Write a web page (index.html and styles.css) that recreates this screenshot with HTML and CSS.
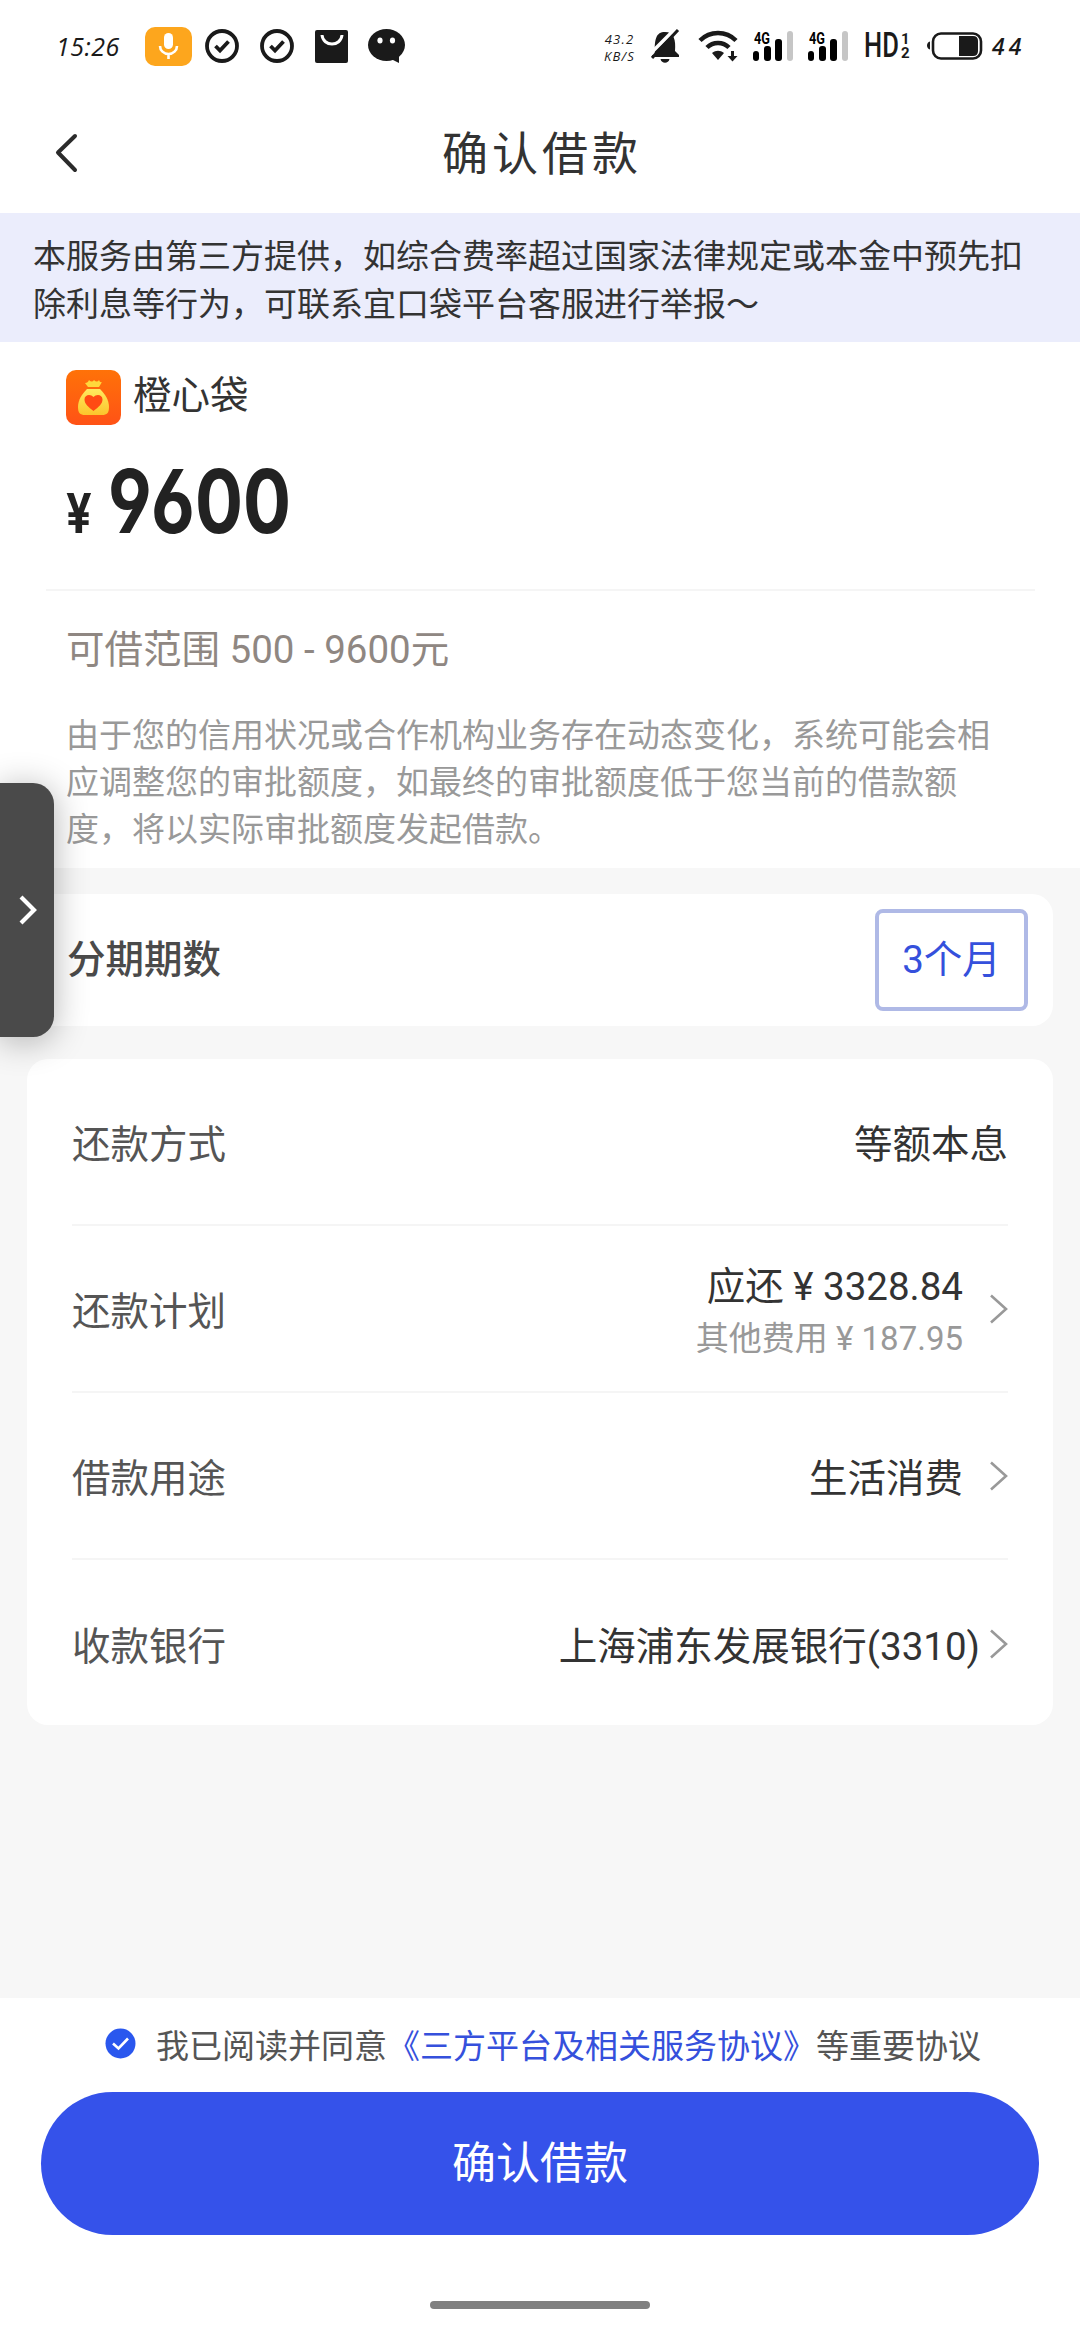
FILE: index.html
```html
<!DOCTYPE html>
<html lang="zh-CN">
  <head>
    <meta charset="UTF-8" />
    <meta name="viewport" content="width=device-width, initial-scale=1.0" />
    <title>确认借款</title>
    <link rel="stylesheet" href="styles.css" />
  </head>
  <body class="body">
    <div class="statusBar">
      <span class="time">15:26</span>
      <svg class="mic" width="47" height="39" viewBox="0 0 47 39">
        <rect width="47" height="39" rx="10" fill="#fda61d" />
        <rect x="19" y="6" width="9" height="16" rx="4.5" fill="#fff" />
        <path d="M15 19a8.500 8 0 0 0 17 0M23.500 27v5" fill="none" stroke="#fff" stroke-width="2.600" />
      </svg>
      <svg class="check" width="34" height="34" viewBox="0 0 34 34">
        <circle cx="17" cy="17" r="15" fill="none" stroke="#1a1a1a" stroke-width="3.800" />
        <path d="M10.500 17l4.500 4.500 8.500-9" fill="none" stroke="#1a1a1a" stroke-width="3.800" />
      </svg>
      <svg class="check2" width="34" height="34" viewBox="0 0 34 34">
        <circle cx="17" cy="17" r="15" fill="none" stroke="#1a1a1a" stroke-width="3.800" />
        <path d="M10.500 17l4.500 4.500 8.500-9" fill="none" stroke="#1a1a1a" stroke-width="3.800" />
      </svg>
      <svg class="bag" width="33" height="33" viewBox="0 0 33 33">
        <rect width="33" height="33" rx="2" fill="#1a1a1a" />
        <path d="M7 5c1 12 19 12 20 0" fill="none" stroke="#fff" stroke-width="3" />
      </svg>
      <svg class="wechat" width="37" height="34" viewBox="0 0 37 34">
        <ellipse cx="18.500" cy="16" rx="18.500" ry="16" fill="#1a1a1a" />
        <path d="M23 30l8 4v-8z" fill="#1a1a1a" />
        <ellipse cx="12" cy="11.500" rx="2.600" ry="3" fill="#fff" />
        <ellipse cx="24.500" cy="11.500" rx="2.600" ry="3" fill="#fff" />
      </svg>
      <div class="statusRight">
        <div class="speed"><span>43.2</span><span>KB/S</span></div>
        <svg class="bell" width="29" height="35" viewBox="0 0 29 35">
          <path d="M4 27C3 10 5 3 14 3s11 8 10 19l4 4v2H1v-2z" fill="#1a1a1a" />
          <path d="M9.500 30h9c-1 5-8 5-9 0z" fill="#1a1a1a" />
          <path d="M-3 27L26-2" stroke="#fff" stroke-width="3.500" />
          <path d="M1 29L27 1" stroke="#1a1a1a" stroke-width="3" />
        </svg>
        <svg class="wifi" width="40" height="31" viewBox="0 0 40 31">
          <path d="M1 9.500C11-.5 27-.5 37 9.500" fill="none" stroke="#1a1a1a" stroke-width="4.500" />
          <path d="M8 16.500c6-6 16-6 22 0" fill="none" stroke="#1a1a1a" stroke-width="4.500" />
          <path d="M13 22c4-3 8-3 12 0l-6 7z" fill="#1a1a1a" />
          <path d="M33.500 20v7" fill="none" stroke="#1a1a1a" stroke-width="3" />
          <path d="M28.500 25h10l-5 5.500z" fill="#1a1a1a" />
        </svg>
        <svg class="signal" width="41" height="31" viewBox="0 0 41 31">
          <text class="net" x="1" y="12.500" textLength="16" lengthAdjust="spacingAndGlyphs">4G</text>
          <rect x="0" y="20" width="6" height="10" rx="3" />
          <rect x="11" y="15" width="7" height="15" rx="3" />
          <rect x="22" y="8" width="7" height="22" rx="3" />
          <rect x="34" y="0" width="6" height="30" rx="3" fill="#c6c6c6" />
        </svg>
        <svg class="signal" width="41" height="31" viewBox="0 0 41 31">
          <text class="net" x="1" y="12.500" textLength="16" lengthAdjust="spacingAndGlyphs">4G</text>
          <rect x="0" y="20" width="6" height="10" rx="3" />
          <rect x="11" y="15" width="7" height="15" rx="3" />
          <rect x="22" y="8" width="7" height="22" rx="3" />
          <rect x="34" y="0" width="6" height="30" rx="3" fill="#c6c6c6" />
        </svg>
        <div class="hd">
          <span class="hdText">HD</span>
          <div class="hdNum"><span>1</span><span>2</span></div>
        </div>
        <svg class="battery" width="56" height="28" viewBox="0 0 56 28">
          <path d="M3 9.500v8c-4-1-4-7 0-8z" fill="#1a1a1a" />
          <rect x="6" y="1.500" width="48" height="25" rx="8" fill="none" stroke="#1a1a1a" stroke-width="2.600" />
          <path d="M32 4h14q5 0 5 5v10q0 5-5 5H32z" fill="#1a1a1a" />
        </svg>
        <span class="percent">44</span>
      </div>
    </div>

    <div class="header">
      <svg class="back" width="24" height="40" viewBox="0 0 24 40">
        <path d="M20 3L3 19.500 20 37" fill="none" stroke="#2b2b2b" stroke-width="4" stroke-linecap="round" stroke-linejoin="round" />
      </svg>
      <h1 class="title">确认借款</h1>
    </div>

    <div class="notice">本服务由第三方提供，如综合费率超过国家法律规定或本金中预先扣<br />除利息等行为，可联系宜口袋平台客服进行举报～</div>

    <div class="loan">
      <div class="brand">
        <svg width="55" height="55" viewBox="0 0 55 55">
          <defs>
            <linearGradient id="logoBg" x1="0" y1="0" x2="0" y2="1">
              <stop offset="0" stop-color="#ff7208" />
              <stop offset="1" stop-color="#ff5216" />
            </linearGradient>
            <linearGradient id="logoBag" x1="0" y1="0" x2="0" y2="1">
              <stop offset="0" stop-color="#ffe95e" />
              <stop offset="1" stop-color="#fcc52c" />
            </linearGradient>
          </defs>
          <rect width="55" height="55" rx="10" fill="url(#logoBg)" />
          <path d="M19 13q3 0 4-3 3 3 5 0 3 3 5 0 1 3 3 2l-3 5H22z" fill="#ffd83c" />
          <path d="M21 19h13c5 5 9 11 9 18 0 6-2 8-7 8H19c-5 0-7-2-7-8 0-7 4-13 9-18z" fill="url(#logoBag)" />
          <path d="M27.500 41c-5-4-9-7-9-11.500 0-5 6-6 9-2.500 3-3.500 9-2.500 9 2.500 0 4.500-4 7.500-9 11.500z" fill="#ff4a13" />
        </svg>
        <span>橙心袋</span>
      </div>
      <div class="amount"><span class="yen">¥</span><span class="number">9600</span></div>
      <div class="line"></div>
      <p class="range">可借范围 500 - 9600元</p>
      <p class="desc">由于您的信用状况或合作机构业务存在动态变化，系统可能会相<br />应调整您的审批额度，如最终的审批额度低于您当前的借款额<br />度，将以实际审批额度发起借款。</p>
    </div>

    <div class="card period">
      <span class="periodLabel">分期期数</span>
      <button class="month">3个月</button>
    </div>

    <div class="card list">
      <div class="row">
        <span class="label">还款方式</span>
        <span class="value">等额本息</span>
      </div>
      <div class="row">
        <span class="label">还款计划</span>
        <div class="value plan">
          <span>应还 ¥ 3328.84</span>
          <span class="fee">其他费用 ¥ 187.95</span>
        </div>
        <svg class="arrow" width="18" height="30" viewBox="0 0 18 30">
          <path d="M1 1.500L16 15 1 28.500" />
        </svg>
      </div>
      <div class="row">
        <span class="label">借款用途</span>
        <span class="value">生活消费</span>
        <svg class="arrow" width="18" height="30" viewBox="0 0 18 30">
          <path d="M1 1.500L16 15 1 28.500" />
        </svg>
      </div>
      <div class="row">
        <span class="label">收款银行</span>
        <span class="value">上海浦东发展银行(3310)</span>
        <svg class="arrow near" width="18" height="30" viewBox="0 0 18 30">
          <path d="M1 1.500L16 15 1 28.500" />
        </svg>
      </div>
    </div>

    <div class="footer">
      <div class="agree">
        <svg width="31" height="31" viewBox="0 0 31 31">
          <circle cx="15.500" cy="15.500" r="15" fill="#2a57ee" />
          <path d="M8 15.500l5.500 5L23 10.500" fill="none" stroke="#fff" stroke-width="2.600" />
        </svg>
        <p>我已阅读并同意<a class="link">《三方平台及相关服务协议》</a>等重要协议</p>
      </div>
      <button class="submit">确认借款</button>
      <div class="homeBar"></div>
    </div>

    <!-- pestaña lateral -->
    <div class="sideTab">
      <svg width="20" height="32" viewBox="0 0 20 32">
        <path d="M2 3l13 13L2 29" fill="none" stroke="#fff" stroke-width="4.200" />
      </svg>
    </div>
  </body>
</html>
```
FILE: styles.css
```css
* {
  box-sizing: border-box;
}
.body {
  margin: 0;
  width: 1080px;
  height: 2340px;
  position: relative;
  overflow: hidden;
  display: flex;
  flex-direction: column;
  background-color: #f7f7f7;
  color: #333;
  font-family: Roboto, "Noto Sans CJK SC", sans-serif;
  font-size: 38.5px;
}
svg {
  display: block;
  flex: none;
  overflow: visible;
}
p {
  margin: 0;
}
button {
  font-family: inherit;
  padding: 0;
}

/* status bar */
.statusBar {
  height: 92px;
  padding: 0 55px 0 56px;
  background-color: #fff;
  display: flex;
  align-items: center;
}
.time {
  width: 89px;
  font-family: "Open Sans", sans-serif;
  font-size: 25px;
  font-style: italic;
  letter-spacing: 0.5px;
  color: #1a1a1a;
}
.check {
  margin-left: 13px;
}
.check2 {
  margin-left: 21px;
}
.bag {
  margin-left: 21px;
}
.wechat {
  margin-left: 20px;
}
.statusRight {
  flex: 1;
  display: flex;
  align-items: center;
  justify-content: flex-end;
}
.speed {
  display: flex;
  flex-direction: column;
  align-items: center;
  gap: 3px;
  font-family: "Open Sans", sans-serif;
  font-size: 13px;
  font-style: italic;
  line-height: 14px;
  letter-spacing: 1.2px;
  color: #1a1a1a;
  margin-right: 16px;
  padding-top: 2px;
}
.bell {
  overflow: hidden;
}
.wifi {
  margin-left: 19px;
}
.signal {
  margin-left: 14px;
}
.net {
  font-size: 16px;
  font-weight: 700;
}
.hd {
  width: 45px;
  margin-left: 15px;
  display: flex;
  align-items: center;
  gap: 2px;
  color: #1a1a1a;
}
.hdText {
  width: 35px;
  font-size: 35px;
  font-weight: 500;
  line-height: 40px;
  transform: scaleX(0.73);
  transform-origin: left;
}
.hdNum {
  display: flex;
  flex-direction: column;
  font-size: 15px;
  font-weight: 700;
  line-height: 14px;
}
.battery {
  margin-left: 18px;
}
.percent {
  width: 33px;
  margin-left: 9px;
  font-family: "Open Sans", sans-serif;
  font-size: 23px;
  font-style: italic;
  font-weight: 600;
  letter-spacing: 4px;
  color: #1a1a1a;
}

/* header */
.header {
  height: 121px;
  padding: 0 55px;
  background-color: #fff;
  display: grid;
  grid-template-columns: 24px 1fr 24px;
  align-items: center;
}
.title {
  margin: 0;
  text-align: center;
  font-size: 46px;
  font-weight: 400;
  letter-spacing: 4px;
  line-height: 60px;
  padding: 3px 0 0 4px;
}

.notice {
  height: 129px;
  padding: 20px 33px 0;
  background-color: #ebedfc;
  font-size: 33px;
  line-height: 48px;
  white-space: nowrap;
}

/* loan amount */
.loan {
  height: 526px;
  padding: 28px 45px 0 46px;
  background-color: #fff;
}
.brand {
  height: 55px;
  padding-left: 20px;
  display: flex;
  align-items: center;
  gap: 12px;
  line-height: 50px;
}
.brand span {
  margin-top: -3px;
}
.amount {
  height: 164px;
  padding: 23px 0 0 20px;
  display: flex;
  align-items: baseline;
  font-family: Inter, sans-serif;
  font-weight: 700;
  color: #222;
}
.yen {
  width: 42px;
  font-size: 55px;
  transform: scaleX(0.82);
  transform-origin: left;
}
.number {
  font-size: 88px;
  line-height: 106px;
  font-feature-settings: "cv03", "cv04", "ss01";
  transform: scaleX(0.81);
  transform-origin: left;
}
.line {
  height: 2px;
  background-color: #f5f5f5;
}
.range {
  padding-left: 20px;
  margin-top: 32px;
  line-height: 54px;
  color: #8f8782;
}
.desc {
  padding-left: 20px;
  margin-top: 35px;
  font-size: 33px;
  line-height: 47px;
  color: #999;
  white-space: nowrap;
}

.card {
  margin: 0 27px;
  border-radius: 21px;
  background-color: #fff;
}
.period {
  height: 132px;
  margin-top: 26px;
  padding: 0 25px 0 40px;
  display: flex;
  align-items: center;
  justify-content: space-between;
}
.periodLabel {
  padding-bottom: 9px;
  font-weight: 500;
  color: #4a4a4a;
}
.month {
  width: 153px;
  height: 102px;
  padding-bottom: 9px;
  border: 4px solid #afb9e6;
  border-radius: 8px;
  background-color: #fff;
  color: #3550dc;
  font-size: 38.5px;
}

/* repayment details */
.list {
  height: 666px;
  margin-top: 33px;
  padding: 0 45px;
}
.row {
  height: 167px;
  display: flex;
  align-items: center;
  border-bottom: 2px solid #f5f5f5;
}
.row:last-child {
  border-bottom: none;
}
.label {
  padding-bottom: 2px;
  color: #555;
}
.value {
  margin-left: auto;
  padding-bottom: 2px;
}
.plan {
  display: flex;
  flex-direction: column;
  align-items: flex-end;
  padding: 9px 0 0;
  line-height: 52px;
}
.fee {
  font-size: 33px;
  color: #999;
}
.arrow {
  margin-left: 27px;
}
.arrow path {
  fill: none;
  stroke: #999;
  stroke-width: 2.6;
}
.near {
  margin-left: 10px;
}

/* footer */
.footer {
  height: 342px;
  margin-top: auto;
  padding: 22px 41px 0;
  background-color: #fff;
}
.agree {
  height: 72px;
  padding-left: 64px;
  display: flex;
  gap: 20px;
  font-size: 33px;
  line-height: 48px;
  color: #555;
  white-space: nowrap;
}
.agree svg {
  margin-top: 8px;
}
.agree p {
  padding-top: 3px;
}
.link {
  color: #3550dc;
}
.submit {
  display: block;
  width: 998px;
  height: 143px;
  padding-bottom: 7px;
  border: none;
  border-radius: 72px;
  background-color: #3552ea;
  color: #fff;
  font-size: 44px;
}
.homeBar {
  width: 220px;
  height: 8px;
  margin: 66px auto 0;
  border-radius: 4px;
  background-color: #808080;
}

.sideTab {
  position: absolute;
  left: 0;
  top: 783px;
  width: 54px;
  height: 254px;
  padding-left: 19px;
  border-radius: 0 21px 21px 0;
  background-color: #4a4a4a;
  box-shadow: 0 4px 34px rgba(0, 0, 0, 0.3);
  display: flex;
  align-items: center;
}
```
